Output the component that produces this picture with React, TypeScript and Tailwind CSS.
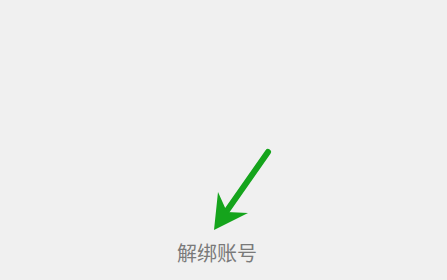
export default function App() {
  return (
    <div className="w-[447px] h-[280px] bg-[#f0f0f0] flex flex-col overflow-hidden">
      <div className="h-[140px]" />
      <svg width="447" height="100" viewBox="0 140 447 100" className="block">
        <line x1="268" y1="152" x2="226" y2="212" stroke="#15a41c" strokeWidth="6" strokeLinecap="round" />
        <polygon points="218,192 227,212 248,213 214,230" fill="#15a41c" />
      </svg>
      <div
        className="pl-[177px] mt-[3px] text-[20px] leading-[20px] text-[#7a7a7a]"
        style={{ fontFamily: '"Noto Sans CJK SC", sans-serif' }}
      >
        解绑账号
      </div>
    </div>
  );
}
